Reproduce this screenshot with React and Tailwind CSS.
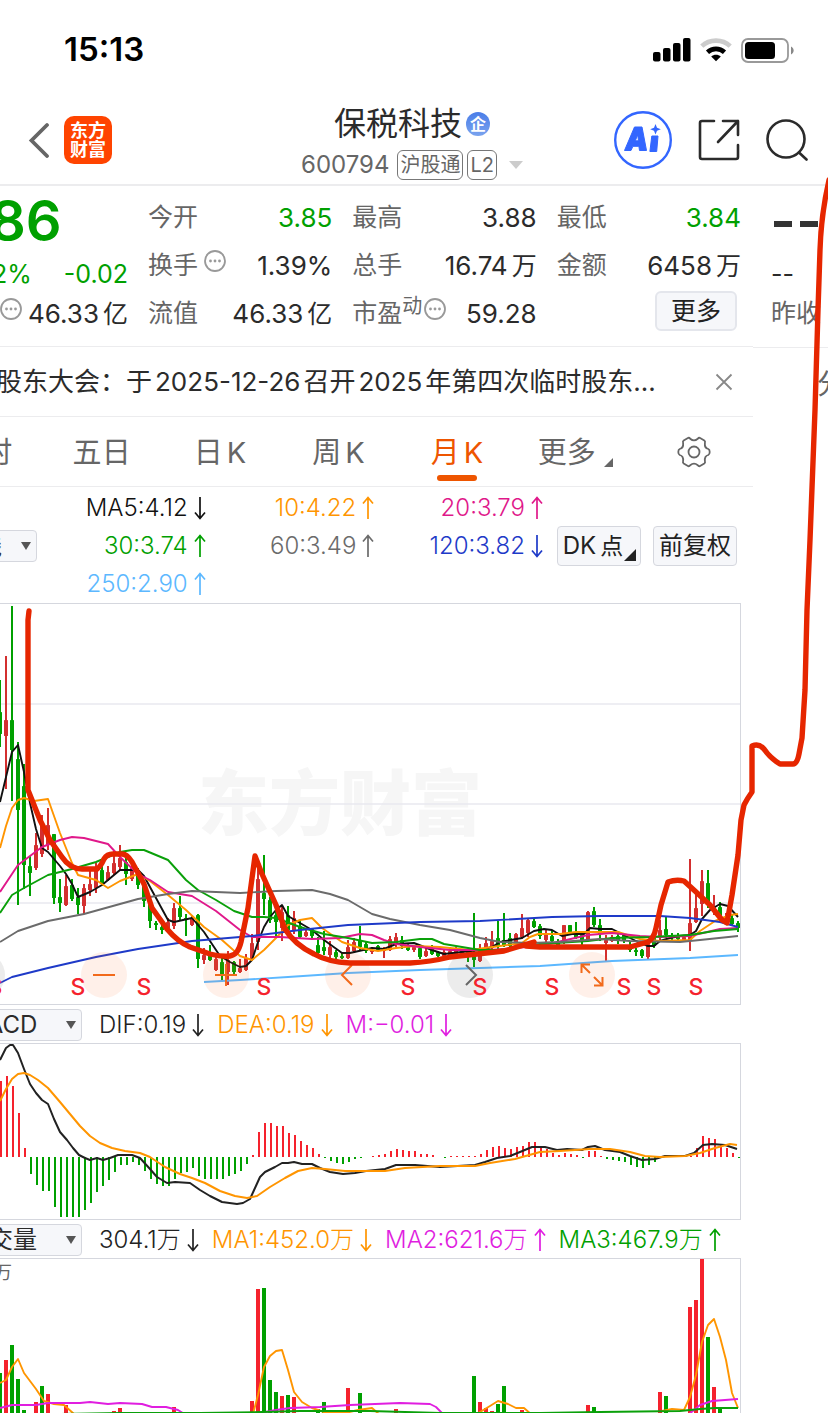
import { useState } from "react";

const RED = "#d32f2f";
const GREEN = "#00a000";

// one candle every 6px: [up, high, top, bottom, low]
const candles = [
    [0, 80, 112, 134, 147], [1, 56, 120, 136, 189], [0, 6, 120, 150, 201], [0, 142, 159, 210, 305],
    [0, 164, 186, 265, 289], [0, 256, 266, 273, 296], [1, 233, 245, 268, 270], [1, 215, 225, 254, 257],
    [1, 208, 225, 245, 250], [0, 234, 234, 298, 304], [0, 279, 297, 303, 312], [1, 275, 286, 305, 306],
    [0, 279, 285, 299, 301], [0, 288, 297, 305, 314], [1, 284, 288, 306, 314], [1, 270, 284, 290, 296],
    [1, 263, 270, 288, 293], [0, 264, 270, 284, 286], [1, 266, 272, 280, 281], [1, 250, 263, 273, 275],
    [1, 245, 258, 267, 270], [0, 257, 262, 274, 285], [1, 265, 268, 279, 281], [0, 268, 270, 285, 289],
    [0, 282, 284, 301, 307], [0, 300, 304, 321, 328], [0, 321, 323, 325, 330], [0, 325, 327, 330, 334],
    [1, 318, 322, 328, 329], [1, 303, 308, 326, 329], [0, 296, 308, 317, 321], [0, 314, 318, 320, 336],
    [1, 315, 318, 325, 326], [0, 314, 315, 359, 368], [1, 348, 355, 360, 364], [0, 345, 355, 360, 361],
    [1, 357, 359, 370, 371], [0, 357, 362, 374, 382], [1, 351, 360, 372, 385], [0, 361, 362, 372, 374],
    [1, 359, 368, 372, 373], [1, 354, 358, 370, 371], [1, 334, 343, 360, 361], [1, 262, 279, 342, 350],
    [0, 255, 293, 299, 315], [0, 297, 300, 320, 323], [0, 312, 315, 322, 336], [1, 306, 312, 328, 341],
    [0, 306, 315, 330, 336], [1, 311, 318, 330, 334], [0, 320, 326, 337, 338], [1, 329, 332, 336, 337],
    [0, 328, 329, 336, 338], [0, 337, 345, 353, 354], [0, 331, 347, 351, 355], [1, 341, 347, 355, 358],
    [0, 350, 352, 357, 359], [0, 353, 356, 358, 359], [1, 340, 347, 358, 359], [1, 338, 342, 351, 353],
    [0, 326, 340, 347, 350], [0, 341, 344, 351, 353], [1, 347, 350, 352, 354], [0, 345, 346, 350, 351],
    [1, 347, 349, 351, 358], [1, 336, 339, 350, 351], [1, 333, 337, 345, 347], [0, 336, 340, 346, 349],
    [0, 344, 347, 350, 351], [1, 345, 347, 350, 352], [0, 347, 348, 357, 359], [1, 348, 351, 356, 357],
    [0, 345, 348, 354, 355], [0, 351, 352, 356, 357], [1, 350, 352, 356, 357], [1, 347, 351, 355, 356],
    [1, 347, 350, 354, 356], [0, 349, 351, 354, 356], [0, 350, 352, 356, 362], [0, 313, 356, 360, 367],
    [1, 344, 348, 361, 362], [1, 337, 343, 352, 353], [1, 331, 341, 348, 349], [0, 321, 338, 346, 349],
    [0, 313, 340, 346, 347], [0, 333, 338, 346, 347], [1, 333, 334, 345, 346], [1, 314, 328, 337, 339],
    [1, 319, 320, 333, 337], [0, 319, 321, 327, 328], [0, 324, 326, 336, 339], [1, 330, 334, 340, 342],
    [0, 330, 336, 341, 343], [0, 339, 341, 345, 346], [1, 325, 325, 342, 344], [0, 325, 325, 332, 335],
    [0, 322, 333, 338, 339], [0, 333, 335, 342, 345], [1, 311, 312, 340, 341], [0, 307, 311, 325, 327],
    [0, 319, 325, 334, 341], [1, 335, 340, 343, 361], [1, 335, 337, 341, 342], [0, 334, 336, 340, 344],
    [0, 333, 334, 341, 343], [0, 341, 345, 350, 352], [0, 348, 350, 352, 356], [0, 349, 350, 356, 358],
    [1, 343, 344, 357, 359], [0, 331, 338, 346, 348], [1, 320, 330, 338, 341], [0, 317, 329, 335, 338],
    [0, 333, 335, 338, 340], [0, 333, 336, 339, 341], [1, 335, 337, 340, 342], [1, 259, 323, 341, 351],
    [1, 291, 308, 322, 323], [1, 270, 281, 304, 316], [0, 270, 283, 303, 308], [1, 295, 307, 311, 315],
    [0, 302, 307, 317, 318], [1, 313, 317, 319, 320], [0, 315, 318, 324, 325], [0, 321, 323, 328, 332],
];

const maLines = [
    { color: "#5cb8ff", points: "204,382 240,380 288,377 348,373 420,370 480,368 540,366 612,361 690,358 738,355" },
    { color: "#111111", points: "0,202 12,152 18,145 24,172 30,203 36,229 42,248 48,252 60,266 66,274 72,284 78,297 90,292 102,285 108,280 120,270 138,270 144,276 168,320 174,322 192,318 204,332 220,356 230,362 240,367 246,366 252,360 258,342 264,327 270,317 276,310 282,305 288,316 300,323 312,330 324,340 342,353 350,353 372,348 384,349 396,344 414,343 432,350 444,354 462,352 480,350 492,347 500,342 522,338 534,331 544,329 552,330 562,336 572,334 584,334 590,328 600,329 612,329 624,335 636,341 648,346 654,346 660,341 670,338 680,336 690,335 696,331 702,319 710,310 720,304 728,306 738,317" },
    { color: "#ff9500", points: "0,248 6,226 12,208 18,200 24,198 34,201 48,199 60,233 72,263 78,275 96,280 108,288 120,281 138,274 150,281 168,295 186,310 204,327 222,340 240,356 252,360 264,350 276,338 288,325 300,320 312,318 322,328 342,342 360,348 378,351 396,348 414,346 440,347 470,350 500,346 522,343 530,337 538,334 560,334 576,332 618,332 640,339 660,341 690,340 700,331 715,321 730,315 738,314" },
    { color: "#e0188a", points: "0,292 18,265 42,247 60,240 72,237 84,238 108,244 120,257 138,274 150,280 168,292 192,296 216,311 240,330 252,337 280,337 312,339 340,338 360,334 372,335 384,340 396,344 420,347 450,350 490,350 540,346 562,341 588,335 612,333 640,336 660,337 690,336 720,329 738,328" },
    { color: "#0aa00a", points: "0,313 12,295 24,288 48,275 72,269 96,262 120,252 132,250 144,250 168,260 186,280 198,290 216,300 234,311 252,317 264,317 276,318 300,327 324,334 348,338 372,343 396,342 420,339 432,339 444,344 480,350 500,350 540,344 588,341 612,338 650,337 690,335 714,331 738,329" },
    { color: "#6b6b6b", points: "0,342 18,331 48,321 84,314 138,299 168,294 192,291 240,293 276,291 312,290 330,294 348,300 372,314 390,319 420,325 450,330 480,338 500,342 530,343 560,342 600,339 630,341 680,342 700,340 738,336" },
    { color: "#1e3ac8", points: "0,383 12,377 48,368 96,357 138,349 192,341 252,336 300,330 348,325 420,322 480,321 552,317 600,316 660,316 690,318 720,322 738,327" },
];

// MACD histogram tips, the zero line is at 152
const macdBars = [
    76, 71, 81, 108, 143, 169, 180, 186, 186, 202, 212, 212, 212, 212, 205, 198, 187, 181, 175, 167, 160, 160, 157,
    160, 166, 174, 179, 181, 181, 174, 168, 167, 163, 171, 174, 174, 174, 174, 171, 169, 166, 159, 150, 127, 118,
    118, 121, 121, 128, 130, 136, 140, 143, 149, 153, 156, 158, 159, 157, 154, 153, 152, 151, 150, 149, 146, 144,
    145, 146, 146, 149, 149, 150, 152, 153, 151, 151, 151, 151, 151, 149, 145, 142, 141, 143, 144, 142, 141, 137,
    137, 141, 144, 148, 150, 148, 149, 150, 153, 146, 146, 151, 154, 155, 156, 157, 160, 162, 163, 160, 157, 153,
    152, 152, 152, 152, 151, 143, 131, 133, 134, 139, 143, 148, 153,
];

const DIF = "0,55 6,43 10,40 13,40 18,48 24,64 30,79 36,88 42,95 48,99 54,114 60,127 67,135 73,143 79,150 85,153 90,155 97,153 103,155 110,153 118,150 132,150 140,153 150,164 157,172 167,178 175,177 190,178 200,185 210,191 222,197 237,199 243,198 250,194 255,183 260,172 265,167 275,162 282,158 288,158 294,157 302,159 312,159 320,163 330,167 343,169 355,168 366,166 385,164 396,160 415,160 440,162 475,160 485,157 497,153 510,151 520,147 532,142 545,142 557,145 567,144 582,145 588,142 595,141 605,145 620,147 630,151 642,155 655,154 665,151 685,151 694,148 703,140 712,139 725,140 737,144";
const DEA = "0,96 6,84 12,74 18,69 24,68 30,70 38,75 48,83 60,97 70,109 80,121 90,131 100,138 112,143 125,146 140,148 150,152 165,162 180,169 192,173 205,178 220,186 235,191 247,193 257,191 270,182 285,173 298,166 312,163 325,164 345,166 385,166 405,163 440,161 475,161 490,158 515,154 540,147 560,146 590,144 610,144 630,147 645,151 660,152 685,151 700,148 715,143 730,139 737,140";

// [x, up, top]
const volumes = [
    [0, 0, 158], [6, 1, 145], [12, 0, 130], [18, 0, 164], [24, 0, 195], [36, 1, 187], [42, 0, 171], [48, 1, 179],
    [66, 1, 190], [114, 1, 196], [120, 1, 193], [174, 1, 192], [252, 1, 186], [258, 1, 74], [264, 0, 73],
    [270, 0, 165], [276, 0, 177], [282, 1, 181], [288, 0, 180], [294, 1, 182], [318, 0, 194], [324, 0, 187],
    [348, 1, 173], [360, 0, 178], [396, 1, 194], [474, 0, 161], [480, 1, 187], [486, 1, 193], [492, 1, 196],
    [498, 0, 189], [504, 0, 171], [522, 1, 195], [588, 1, 190], [594, 0, 192], [660, 1, 177], [666, 0, 181],
    [690, 1, 92], [696, 1, 85], [702, 1, 43], [708, 0, 122], [714, 1, 172], [720, 0, 193],
];

const volumeLines = [
    { color: "#ff9500", points: "0,168 6,165 12,152 18,144 24,158 36,174 44,186 54,189 64,190 74,199" },
    { color: "#ff9500", points: "253,199 258,180 264,152 270,141 276,136 282,135 288,155 294,177 302,187 312,193 324,197 345,198 358,195 372,193 380,200" },
    { color: "#ff9500", points: "475,200 490,191 498,186 508,189 516,193 524,193 532,200" },
    { color: "#ff9500", points: "662,196 672,194 684,195 690,182 696,160 702,127 708,110 714,104 720,122 726,145 732,178 738,193" },
    { color: "#e01ee0", points: "0,193 12,190 36,190 48,188 80,188 90,187 108,189 120,188 142,189 152,192 166,192 178,195 186,200" },
    { color: "#e01ee0", points: "260,198 276,195 290,193 320,192 350,190 400,188 430,189 436,192 444,200" },
    { color: "#e01ee0", points: "688,200 700,190 712,186 738,184" },
    { color: "#0aa00a", points: "60,199 120,198 200,198 262,197 300,196 370,196 440,198 540,198 600,197 680,196 700,194 715,193 738,193" },
];

const signals = [-5, 78, 144, 264, 408, 480, 552, 624, 654, 696];

const tabs = ["分时", "五日", "日K", "周K", "月K", "更多"];

function Arrow({ up }) {
    return (
        <svg viewBox="0 0 12 24" className="h-6 w-3 shrink-0" fill="none" stroke="currentColor" strokeWidth="1.7">
            {up ? <path d="M6 23V1.5M1 7.5L6 1.5l5 6" /> : <path d="M6 1v21.5M1 16.5l5 6 5-6" />}
        </svg>
    );
}

function Indicator({ text, up, className }) {
    return (
        <span className={`flex items-center justify-end gap-1.5 text-2xl leading-9 font-light ${className}`}>
            {text}
            <Arrow up={up} />
        </span>
    );
}

function Dots({ className = "" }) {
    return (
        <svg viewBox="0 0 22 22" className={`mb-2.5 h-[22px] w-[22px] shrink-0 ${className}`}>
            <circle cx="11" cy="11" r="10" fill="none" stroke="#999" strokeWidth="1.8" />
            <circle cx="6.5" cy="11" r="1.4" fill="#999" />
            <circle cx="11" cy="11" r="1.4" fill="#999" />
            <circle cx="15.5" cy="11" r="1.4" fill="#999" />
        </svg>
    );
}

function Quote({ label, extra, value, unit, green }) {
    return (
        <div className="flex h-12 items-center justify-between">
            <span className="flex items-center text-[25px] text-[#666]">
                {label}
                {extra}
            </span>
            <span className={`flex items-center gap-1 text-[26px] leading-9 ${green ? "text-[#00a000]" : "text-[#2b2b2b]"}`}>
                {value}
                {unit && <span className="text-[25px]">{unit}</span>}
            </span>
        </div>
    );
}

function Picker({ label, value, className }) {
    return (
        <label className={`relative block h-8 shrink-0 ${className}`}>
            <select
                aria-label={label}
                className="h-full w-full appearance-none rounded-sm border border-[#d5d7de] bg-[#f6f7fa] pl-2 text-2xl leading-7 text-[#2b2b2b]"
            >
                <option>{value}</option>
            </select>
            <svg viewBox="0 0 10 8" className="pointer-events-none absolute top-3 right-1.5 h-2 w-2.5">
                <path d="M0 0h10L5 8z" fill="#555" />
            </svg>
        </label>
    );
}

function StatusBar() {
    return (
        <div className="flex h-24 items-center justify-between pt-1 pr-[34px] pl-16">
            <span className="text-[33px] font-semibold text-black">15:13</span>
            <div className="flex items-center gap-[9px]">
                <svg viewBox="0 0 38 24" className="h-6 w-[38px]">
                    <rect x="0" y="14" width="7.5" height="9.5" rx="2" />
                    <rect x="10" y="10" width="7.5" height="13.5" rx="2" />
                    <rect x="20" y="5" width="7.5" height="18.5" rx="2" />
                    <rect x="30" y="0" width="7.5" height="23.5" rx="2" />
                </svg>
                <svg viewBox="0 0 32 24" className="h-6 w-8" fill="none" strokeWidth="4.6">
                    <path d="M1.8 8.2C9.5 0.8 22.5 0.8 30.2 8.2" stroke="#ccc" />
                    <path d="M7.5 14.2c4.8-4.4 12.2-4.4 17 0" stroke="#000" />
                    <path d="M16 23.3l-4.8-4.7c2.7-2.5 6.9-2.5 9.6 0z" fill="#000" />
                </svg>
                <svg viewBox="0 0 53 25" className="h-[25px] w-[53px]">
                    <rect x="1" y="1" width="46" height="23" rx="6" fill="none" stroke="#999" strokeWidth="1.8" />
                    <rect x="4" y="4" width="30" height="17" rx="3.5" />
                    <path d="M50 8.5c3.5 1.5 3.5 6.5 0 8z" fill="#888" />
                </svg>
            </div>
        </div>
    );
}

function Header() {
    return (
        <header className="flex h-[90px] items-center border-b-2 border-[#ececee] px-5">
            <div className="flex flex-1 items-center gap-3.5 pl-2">
                <button type="button" aria-label="返回">
                    <svg viewBox="0 0 22 36" className="h-9 w-[22px]" fill="none" stroke="#666" strokeWidth="3.8" strokeLinecap="round">
                        <path d="M19 3L3.5 18.5 19 34" strokeLinejoin="miter" />
                    </svg>
                </button>
                <a href="#" className="flex h-12 w-12 flex-col items-center justify-center rounded-[10px] bg-[#ff4400] text-[18px] leading-[19px] font-bold text-white">
                    <span>东方</span>
                    <span>财富</span>
                </a>
            </div>
            <div className="flex flex-col items-center pt-2 pr-3">
                <h1 className="flex items-center gap-1 text-[32px] leading-[42px] text-[#2b2b2b]">
                    保税科技
                    <span className="flex h-6 w-6 items-center justify-center rounded-full bg-linear-to-b from-[#4a7de8] to-[#7aa3ee] text-[16px] leading-none font-bold text-white">
                        企
                    </span>
                </h1>
                <div className="flex items-center gap-1 text-[#666]">
                    <span className="mr-1 text-2xl leading-10">600794</span>
                    <span className="rounded-md border border-[#777] px-0.5 text-[20px] leading-7">沪股通</span>
                    <span className="rounded-md border border-[#777] px-0.5 text-[20px] leading-7">L2</span>
                    <svg viewBox="0 0 14 8" className="ml-2 h-2 w-3.5">
                        <path d="M0 0h14L7 8z" fill="#ccc" />
                    </svg>
                </div>
            </div>
            <div className="flex flex-1 items-center justify-end gap-6.5">
                <button type="button" aria-label="Ai">
                    <svg viewBox="0 0 58 58" className="h-[58px] w-[58px]">
                        <circle cx="29" cy="29" r="27.8" fill="none" stroke="#3366ff" strokeWidth="2.4" />
                        <path d="M20.5 16h7.5l4.5 23.5h-7l-.6-4.2h-6l-1.9 4.2h-6.5zM21.3 29.8h3.2l-.8-6z" fill="#3366ff" fillRule="evenodd" stroke="#3366ff" strokeLinejoin="round" />
                        <path d="M37.8 25h6.2l-1.3 15.5h-6.8z" fill="#3366ff" stroke="#3366ff" strokeLinejoin="round" />
                        <path d="M41.5 13l1.5 3.8 3.8 1.5-3.8 1.5-1.5 3.8-1.5-3.8-3.8-1.5 3.8-1.5z" fill="#3366ff" />
                    </svg>
                </button>
                <button type="button" aria-label="分享">
                    <svg viewBox="0 0 42 42" className="h-[42px] w-[42px]" fill="none" stroke="#2b2b2b" strokeWidth="2.6" strokeLinecap="round" strokeLinejoin="round">
                        <path d="M16 2H4q-2 0-2 2v34q0 2 2 2h34q2 0 2-2V26M25 2h15v14M40 2L20 23" />
                    </svg>
                </button>
                <button type="button" aria-label="搜索">
                    <svg viewBox="0 0 42 42" className="h-[42px] w-[42px]" fill="none" stroke="#2b2b2b" strokeWidth="2.6" strokeLinecap="round">
                        <circle cx="20" cy="20" r="18.5" />
                        <path d="M33 33.5l7.5 7" />
                    </svg>
                </button>
            </div>
        </header>
    );
}

function QuotePanel() {
    return (
        <section className="flex gap-5 border-b border-[#ececee] py-2 pr-3">
            <div className="w-32 text-[25px] whitespace-nowrap text-[#00a000]">
                <div className="-ml-2.5 flex h-[54px] items-center text-[56px] leading-none font-semibold">86</div>
                <div className="-ml-2 flex h-[42px] items-end justify-between leading-8">
                    <span>2%</span>
                    <span>-0.02</span>
                </div>
                <div className="flex h-12 items-center justify-between text-[#2b2b2b]">
                    <Dots />
                    <span className="flex items-center gap-1 text-[26px] leading-9">
                        46.33<span className="text-[25px]">亿</span>
                    </span>
                </div>
            </div>
            <div className="flex-1">
                <Quote label="今开" value="3.85" green />
                <Quote label="换手" extra={<Dots className="ml-1.5" />} value="1.39%" />
                <Quote label="流值" value="46.33" unit="亿" />
            </div>
            <div className="flex-1">
                <Quote label="最高" value="3.88" />
                <Quote label="总手" value="16.74" unit="万" />
                <Quote
                    label="市盈"
                    extra={
                        <>
                            <span className="mb-4 text-xl leading-none">动</span>
                            <Dots className="ml-0.5" />
                        </>
                    }
                    value="59.28"
                />
            </div>
            <div className="flex-1">
                <Quote label="最低" value="3.84" green />
                <Quote label="金额" value="6458" unit="万" />
                <div className="flex h-12 items-start justify-end pt-px pr-1">
                    <button type="button" className="h-10 w-[82px] rounded-md border-2 border-[#e4e6ec] bg-[#f6f7fa] text-[25px] leading-9 text-[#222]">
                        更多
                    </button>
                </div>
            </div>
        </section>
    );
}

function NewsBar({ onClose }) {
    return (
        <section className="flex h-[70px] items-center justify-between border-b border-[#ececee] pr-5">
            <a href="#" className="-ml-1 flex items-center text-[26px] whitespace-nowrap text-[#2b2b2b]">
                股东大会：于
                <span className="mx-[3px]">2025-12-26</span>
                召开
                <span className="mx-[3px]">2025</span>
                年第四次临时股东
                <span>...</span>
            </a>
            <button type="button" aria-label="关闭" onClick={onClose}>
                <svg viewBox="0 0 18 18" className="h-[18px] w-[18px]" stroke="#888" strokeWidth="1.8">
                    <path d="M1.5 1.5l15 15M16.5 1.5l-15 15" />
                </svg>
            </button>
        </section>
    );
}

function Tabs({ active, onChange }) {
    return (
        <nav className="-ml-[76px] grid h-[70px] grid-cols-7 border-b border-[#ececee]">
            {tabs.map((tab) => (
                <button
                    key={tab}
                    type="button"
                    onClick={() => onChange(tab)}
                    className={`relative flex items-center justify-center pt-0.5 text-[29px] ${
                        tab === active ? "text-[#ee5500]" : "text-[#666]"
                    }`}
                >
                    {tab[0]}
                    <span className={tab[1] === "K" ? "ml-1" : ""}>{tab[1]}</span>
                    {tab === "更多" && (
                        <svg viewBox="0 0 9 9" className="mt-5 ml-2 h-[9px] w-[9px]">
                            <path d="M9 0v9H0z" fill="#666" />
                        </svg>
                    )}
                    {tab === active && (
                        <span className="absolute bottom-[5px] h-1.5 w-10 rounded-full bg-[#ee5500]" />
                    )}
                </button>
            ))}
            <button type="button" aria-label="设置" className="flex items-center justify-center">
                <svg viewBox="0 0 34 34" className="h-[34px] w-[34px]" fill="none" stroke="#666" strokeWidth="1.8" strokeLinejoin="round">
                    <circle cx="17" cy="17" r="5.5" />
                    <path d="M10.5 3.2Q12.2 2.2 13.2 3.7Q17 7 20.8 3.7Q21.8 2.2 23.5 3.2L27.3 5.5Q28.5 6.4 27.9 8Q27.3 13 31.3 14Q32.7 14.6 32.7 17Q32.7 19.4 31.3 20Q27.3 21 27.9 26Q28.5 27.6 27.3 28.5L23.5 30.8Q21.8 31.8 20.8 30.3Q17 27 13.2 30.3Q12.2 31.8 10.5 30.8L6.7 28.5Q5.5 27.6 6.1 26Q6.7 21 2.7 20Q1.3 19.4 1.3 17Q1.3 14.6 2.7 14Q6.7 13 6.1 8Q5.5 6.4 6.7 5.5Z" />
                </svg>
            </button>
        </nav>
    );
}

function MaLegend() {
    return (
        <div className="flex items-center pt-[3px] pr-4 pb-px">
            <Picker label="均线" value="均线" className="-ml-[55px] w-[92px]" />
            <div className="grid flex-1 grid-cols-3 gap-y-0.5">
                <Indicator text="MA5:4.12" className="text-[#111]" />
                <Indicator text="10:4.22" up className="text-[#ff9500]" />
                <Indicator text="20:3.79" up className="text-[#e0188a]" />
                <Indicator text="30:3.74" up className="text-[#00a000]" />
                <Indicator text="60:3.49" up className="text-[#6b6b6b]" />
                <Indicator text="120:3.82" className="text-[#1e3ac8]" />
                <Indicator text="250:2.90" up className="text-[#5cb8ff]" />
            </div>
            <button type="button" className="relative ml-3.5 h-10 w-[84px] rounded-sm border border-[#d5d7de] bg-[#f6f7fa] pr-3 text-2xl whitespace-nowrap text-[#222]">
                DK<span className="ml-1 text-[23px]">点</span>
                <svg viewBox="0 0 12 12" className="absolute right-1 bottom-1 h-3 w-3">
                    <path d="M12 0v12H0z" fill="#222" />
                </svg>
            </button>
            <button type="button" className="ml-3 h-10 w-[84px] rounded-sm border border-[#d5d7de] bg-[#f6f7fa] text-2xl whitespace-nowrap text-[#222]">
                前复权
            </button>
        </div>
    );
}

function ChartButton({ label, gray, children }) {
    return (
        <button
            type="button"
            aria-label={label}
            className={`flex h-[46px] w-[46px] shrink-0 items-center justify-center rounded-full ${
                gray ? "bg-[#666]/12 text-[#666]" : "bg-[#ff6a2b]/10 text-[#f26a1b]"
            }`}
        >
            <svg viewBox="0 0 24 24" className="h-6 w-6" fill="none" stroke="currentColor" strokeWidth="2">
                {children}
            </svg>
        </button>
    );
}

function PriceChart() {
    return (
        <div className="relative mr-3 overflow-hidden border-y border-r border-[#d5d7de]">
            <svg viewBox="0 4 740 400" className="block w-full">
                <text x="340" y="229" textAnchor="middle" fontSize="71" fontWeight="900" fill="#f6f6f6">
                    东方财富
                </text>
                {[104, 204, 303].map((y) => (
                    <path key={y} d={`M0 ${y}h740`} stroke="#e9e9ef" strokeWidth="1.4" />
                ))}
                {candles.map(([up, high, top, bottom, low], i) => (
                    <g key={i} fill={up ? RED : GREEN}>
                        <rect x={i * 6 - 1} y={high} width="2" height={low - high} />
                        <rect x={i * 6 - 2} y={top} width="4" height={bottom - top} rx="0.5" />
                    </g>
                ))}
                {maLines.map((line) => (
                    <polyline key={line.color} points={line.points} fill="none" stroke={line.color} strokeWidth="1.9" strokeLinejoin="round" />
                ))}
            </svg>
            <div className="absolute bottom-1.5 -left-[41px] flex gap-[76px]">
                <ChartButton label="向前" gray />
                <ChartButton label="缩小">
                    <path d="M1 12h22" />
                </ChartButton>
                <ChartButton label="放大">
                    <path d="M1 12h22M12 1v22" />
                </ChartButton>
                <ChartButton label="左移">
                    <path d="M16 2L6 12l10 10" />
                </ChartButton>
                <ChartButton label="右移" gray>
                    <path d="M8 2l10 10L8 22" />
                </ChartButton>
                <ChartButton label="全屏">
                    <path d="M10 10L1.5 1.5M1.5 10V1.5H10M14 14l8.5 8.5M22.5 14v8.5H14" />
                </ChartButton>
            </div>
            <svg viewBox="0 4 740 400" className="pointer-events-none absolute inset-0 w-full">
                {signals.map((x) => (
                    <text key={x} x={x} y="395" textAnchor="middle" fontSize="23" fontWeight="500" fill="#f5222d">
                        S
                    </text>
                ))}
            </svg>
        </div>
    );
}

function MacdChart() {
    return (
        <div className="mr-3 border-y border-r border-[#d5d7de]">
            <svg viewBox="0 39 740 175" className="block w-full">
                {macdBars.map((tip, i) => (
                    <rect
                        key={i}
                        x={i * 6}
                        y={Math.min(tip, 152)}
                        width="2"
                        height={Math.abs(tip - 152)}
                        fill={tip < 152 ? "#f5222d" : GREEN}
                    />
                ))}
                <polyline points={DIF} fill="none" stroke="#222" strokeWidth="2" strokeLinejoin="round" />
                <polyline points={DEA} fill="none" stroke="#ff9500" strokeWidth="2" strokeLinejoin="round" />
            </svg>
        </div>
    );
}

function VolumeChart() {
    return (
        <div className="relative mr-3 border-t border-r border-[#d5d7de]">
            <svg viewBox="0 44 740 155" className="block w-full">
                {volumes.map(([x, up, top]) => (
                    <rect key={x} x={x - 2} y={top} width="4" height={200 - top} fill={up ? "#f5222d" : GREEN} />
                ))}
                {volumeLines.map((line) => (
                    <polyline key={line.points} points={line.points} fill="none" stroke={line.color} strokeWidth="1.9" strokeLinejoin="round" />
                ))}
            </svg>
            <span className="absolute top-0.5 -left-1.5 text-[18px] leading-6 text-[#666]">万</span>
        </div>
    );
}

function NextStock() {
    return (
        <aside className="w-[75px] shrink-0 overflow-hidden pt-2 whitespace-nowrap text-[#2b2b2b]">
            <div className="border-b border-[#ececee] pb-[9px] pl-[18px]">
                <div className="flex h-[54px] items-center gap-2 pt-1.5 pl-[3px]">
                    <span className="h-1.5 w-[18px] bg-[#333]" />
                    <span className="h-1.5 w-[18px] bg-[#333]" />
                </div>
                <div className="flex h-[42px] items-end text-[25px] leading-8">--</div>
                <div className="flex h-12 items-center text-[25px] text-[#666]">昨收</div>
            </div>
            <div className="pt-[18px] pl-16 text-[28px] leading-9 text-[#666]">分</div>
        </aside>
    );
}

// freehand marker line drawn over the whole page
function Marker() {
    return (
        <svg
            viewBox="0 0 828 1413"
            className="pointer-events-none absolute inset-x-0 top-0 w-full"
            fill="none"
            stroke="#e62600"
            strokeWidth="5.4"
            strokeLinecap="round"
            strokeLinejoin="round"
        >
            <path d="M29 611L28 620V790L32 800L40 820L50 840L62 857Q70 869 82 869H97Q101 866 104 859Q107 854 113 854H122Q127 854 132 862L144 884L152 908L167 929Q178 942 190 947L210 954Q222 957 230 956Q238 955 241 942L248 908L255 856L262 874L276 905L285 929Q295 945 314 954Q328 962 350 963H410Q430 962 450 957L504 951L534 942" />
            <path d="M526 946L540 947H630L648 942Q654 938 656 928L661 905L668 882Q676 879 684 881L695 891L710 905L722 920L727 923L732 895L738 855L741 820L744 805Q747 799 752 792V746Q759 743 764 749Q770 758 780 764H793Q797 764 799 754L802 738L805 690L807 610L810 540L815 410L818 310L820 250Q821 215 829 180" />
        </svg>
    );
}

export default function App() {
    const [activeTab, setActiveTab] = useState("月K");
    const [showNews, setShowNews] = useState(true);

    return (
        <div className="relative w-full overflow-hidden bg-white font-['Inter','Noto_Sans_CJK_SC',sans-serif]">
            <StatusBar />
            <Header />
            <div className="flex">
                <main className="min-w-0 flex-1 overflow-hidden">
                    <QuotePanel />
                    {showNews && <NewsBar onClose={() => setShowNews(false)} />}
                    <Tabs active={activeTab} onChange={setActiveTab} />
                    <MaLegend />
                    <PriceChart />
                    <div className="flex h-[38px] items-center gap-[13px] pt-0.5 whitespace-nowrap">
                        <Picker label="指标" value="MACD" className="-ml-11 w-[126px]" />
                        <Indicator text="DIF:0.19" className="ml-1 text-[#222]" />
                        <Indicator text="DEA:0.19" className="text-[#ff9500]" />
                        <Indicator text="M:−0.01" className="text-[#e01ee0]" />
                    </div>
                    <MacdChart />
                    <div className="flex h-[38px] items-center gap-[13px] pt-0.5 whitespace-nowrap">
                        <Picker label="指标" value="成交量" className="-ml-11 w-[126px]" />
                        <Indicator text="304.1万" className="ml-1 text-[#222]" />
                        <Indicator text="MA1:452.0万" className="text-[#ff9500]" />
                        <Indicator text="MA2:621.6万" up className="text-[#e01ee0]" />
                        <Indicator text="MA3:467.9万" up className="text-[#00a000]" />
                    </div>
                    <VolumeChart />
                </main>
                <NextStock />
            </div>
            <Marker />
        </div>
    );
}
